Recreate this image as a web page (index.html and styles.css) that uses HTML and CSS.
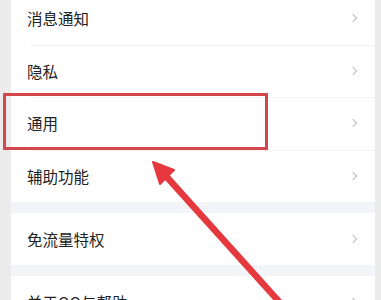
FILE: index.html
```html
<!DOCTYPE html>
<html lang="zh-CN">
<head>
    <meta charset="UTF-8">
    <meta name="viewport" content="width=device-width, initial-scale=1.0">
    <title>设置</title>
    <link rel="stylesheet" href="styles.css">
</head>
<body>
    <div class="screen">
        <div class="settings">
            <div class="group">
                <div class="row"><span>消息通知</span><i class="chevron"></i></div>
                <div class="row"><span>隐私</span><i class="chevron"></i></div>
                <div class="row"><span>通用</span><i class="chevron"></i></div>
                <div class="row"><span>辅助功能</span><i class="chevron"></i></div>
            </div>
            <div class="group">
                <div class="row"><span>免流量特权</span><i class="chevron"></i></div>
            </div>
            <div class="group">
                <div class="row"><span>关于QQ与帮助</span><i class="chevron"></i></div>
            </div>
        </div>

        <!-- annotation drawn over the screenshot -->
        <div class="highlight"></div>
        <svg class="arrow" width="381" height="300" viewBox="0 0 381 300">
            <line x1="165" y1="175" x2="292" y2="316" stroke="#e6393f" stroke-width="6.5" stroke-linecap="round"/>
            <polygon points="153,162 174,170 160,184" fill="#e6393f" stroke="#e6393f" stroke-width="2" stroke-linejoin="round"/>
        </svg>
    </div>
</body>
</html>
```

FILE: styles.css
```css
* {
    margin: 0;
    padding: 0;
    box-sizing: border-box;
}

body {
    background: #ececec;
    font-family: 'Noto Sans CJK SC', 'Noto Sans', sans-serif;
    color: #222;
    overflow: hidden;
}

.screen {
    position: relative;
    width: 381px;
    height: 300px;
    overflow: hidden;
}

.settings {
    margin: -8px 6px 0 11px;
    background: #f3f4f8;
    display: flex;
    flex-direction: column;
    gap: 10.5px;
}

.group {
    background: #fff;
}

.row {
    position: relative;
    height: 52.5px;
    padding: 0 16px;
    display: flex;
    align-items: center;
    justify-content: space-between;
    font-size: 15.5px;
}

.row + .row::before {
    content: '';
    position: absolute;
    top: 0;
    left: 19px;
    right: 0;
    height: 1px;
    background: #f2f2f2;
}

.chevron {
    width: 6px;
    height: 6px;
    margin-right: 3px;
    border-top: 1.2px solid #bcbcbc;
    border-right: 1.2px solid #bcbcbc;
    transform: rotate(45deg);
}

.highlight {
    position: absolute;
    left: 3px;
    top: 93px;
    width: 265px;
    height: 57px;
    border: 3px solid #d5464c;
}

.arrow {
    position: absolute;
    left: 0;
    top: 0;
}
```
